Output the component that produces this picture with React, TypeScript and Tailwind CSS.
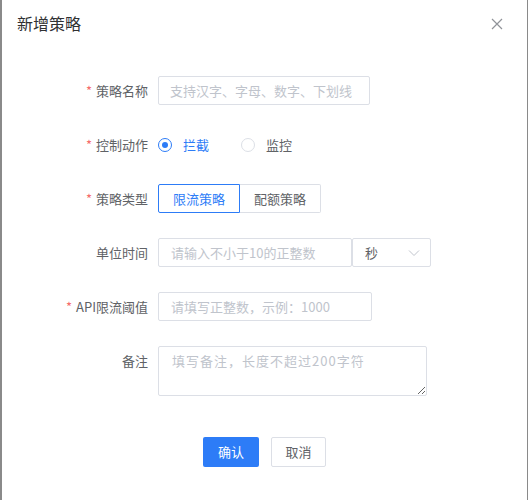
import { useState } from 'react'

const font = { fontFamily: '"Noto Sans CJK SC", "Noto Sans", sans-serif' }

function Label({ text, required }: { text: string; required?: boolean }) {
  return (
    <div className="w-[146px] shrink-0 text-right text-[13px] text-[#606266] leading-[29px]">
      {required && <span className="text-[#f56c6c] mr-[4px]">*</span>}
      {text}
    </div>
  )
}

function Radio({ label, checked, onClick }: { label: string; checked: boolean; onClick: () => void }) {
  return (
    <button type="button" onClick={onClick} className="flex items-center gap-[11px]">
      <span
        className={`w-[14px] h-[14px] rounded-full border flex items-center justify-center bg-white ${
          checked ? 'border-[#2d7cf7]' : 'border-[#dcdfe6]'
        }`}
      >
        {checked && <span className="w-[6px] h-[6px] rounded-full bg-[#2d7cf7]" />}
      </span>
      <span className={`text-[13px] ${checked ? 'text-[#2d7cf7]' : 'text-[#606266]'}`}>{label}</span>
    </button>
  )
}

export default function App() {
  const [action, setAction] = useState('block')
  const [type, setType] = useState('limit')

  return (
    <div style={font} className="h-[500px] w-[528px] bg-[#8a8a8a] pl-[2px] pr-[1px]">
      <div className="h-full bg-white flex flex-col">
        {/* header */}
        <div className="h-[46px] flex items-center justify-between pl-[15px] pr-[24px]">
          <h2 className="text-[16px] text-[#303133]">新增策略</h2>
          <svg width="12" height="12" viewBox="0 0 12 12" className="mt-[2px]">
            <path d="M1 1 L11 11 M11 1 L1 11" stroke="#909399" strokeWidth="1.2" fill="none" />
          </svg>
        </div>

        {/* form */}
        <div className="pt-[30px] flex flex-col gap-[25px]">
          <div className="flex items-center gap-[10px]">
            <Label text="策略名称" required />
            <input
              placeholder="支持汉字、字母、数字、下划线"
              className="w-[212px] h-[29px] border border-[#dcdfe6] rounded-[2px] px-[11px] text-[13px] text-[#606266] placeholder:text-[#c0c4cc] outline-none"
            />
          </div>

          <div className="flex items-center gap-[10px]">
            <Label text="控制动作" required />
            <div className="flex items-center gap-[32px]">
              <Radio label="拦截" checked={action === 'block'} onClick={() => setAction('block')} />
              <Radio label="监控" checked={action === 'monitor'} onClick={() => setAction('monitor')} />
            </div>
          </div>

          <div className="flex items-center gap-[10px]">
            <Label text="策略类型" required />
            <div className="flex">
              <button
                type="button"
                onClick={() => setType('limit')}
                className={`w-[82px] h-[29px] text-[13px] border rounded-l-[2px] ${
                  type === 'limit' ? 'border-[#2d7cf7] text-[#2d7cf7]' : 'border-[#dcdfe6] text-[#606266]'
                }`}
              >
                限流策略
              </button>
              <button
                type="button"
                onClick={() => setType('quota')}
                className={`w-[81px] h-[29px] text-[13px] border border-l-0 rounded-r-[2px] ${
                  type === 'quota' ? 'border-[#2d7cf7] text-[#2d7cf7]' : 'border-[#dcdfe6] text-[#606266]'
                }`}
              >
                配额策略
              </button>
            </div>
          </div>

          <div className="flex items-center gap-[10px]">
            <Label text="单位时间" />
            <div className="flex">
              <input
                placeholder="请输入不小于10的正整数"
                className="w-[194px] h-[29px] border border-[#dcdfe6] rounded-[2px] px-[12px] text-[13px] text-[#606266] placeholder:text-[#c0c4cc] outline-none"
              />
              <div className="w-[79px] h-[29px] border border-[#dcdfe6] rounded-[2px] flex items-center justify-between pl-[12px] pr-[10px]">
                <span className="text-[13px] text-[#606266]">秒</span>
                <svg width="12" height="8" viewBox="0 0 12 8">
                  <path d="M1 1.5 L6 6.5 L11 1.5" stroke="#c0c4cc" strokeWidth="1" fill="none" />
                </svg>
              </div>
            </div>
          </div>

          <div className="flex items-center gap-[10px]">
            <Label text="API限流阈值" required />
            <input
              placeholder="请填写正整数，示例：1000"
              className="w-[214px] h-[29px] border border-[#dcdfe6] rounded-[2px] px-[12px] text-[13px] text-[#606266] placeholder:text-[#c0c4cc] outline-none"
            />
          </div>

          <div className="flex items-start gap-[10px]">
            <Label text="备注" />
            <textarea
              placeholder="填写备注，长度不超过200字符"
              className="w-[269px] h-[50px] border border-[#dcdfe6] rounded-[2px] px-[13px] py-[4px] text-[13px] leading-[20px] tracking-[1px] text-[#606266] placeholder:text-[#c0c4cc] outline-none"
            />
          </div>
        </div>

        {/* footer */}
        <div className="mt-[41px] flex justify-center gap-[12px]">
          <button type="button" className="w-[56px] h-[30px] rounded-[2px] bg-[#2d7cf7] text-white text-[13px]">
            确认
          </button>
          <button
            type="button"
            className="w-[55px] h-[30px] rounded-[2px] border border-[#dcdfe6] bg-white text-[#606266] text-[13px]"
          >
            取消
          </button>
        </div>
      </div>
    </div>
  )
}
